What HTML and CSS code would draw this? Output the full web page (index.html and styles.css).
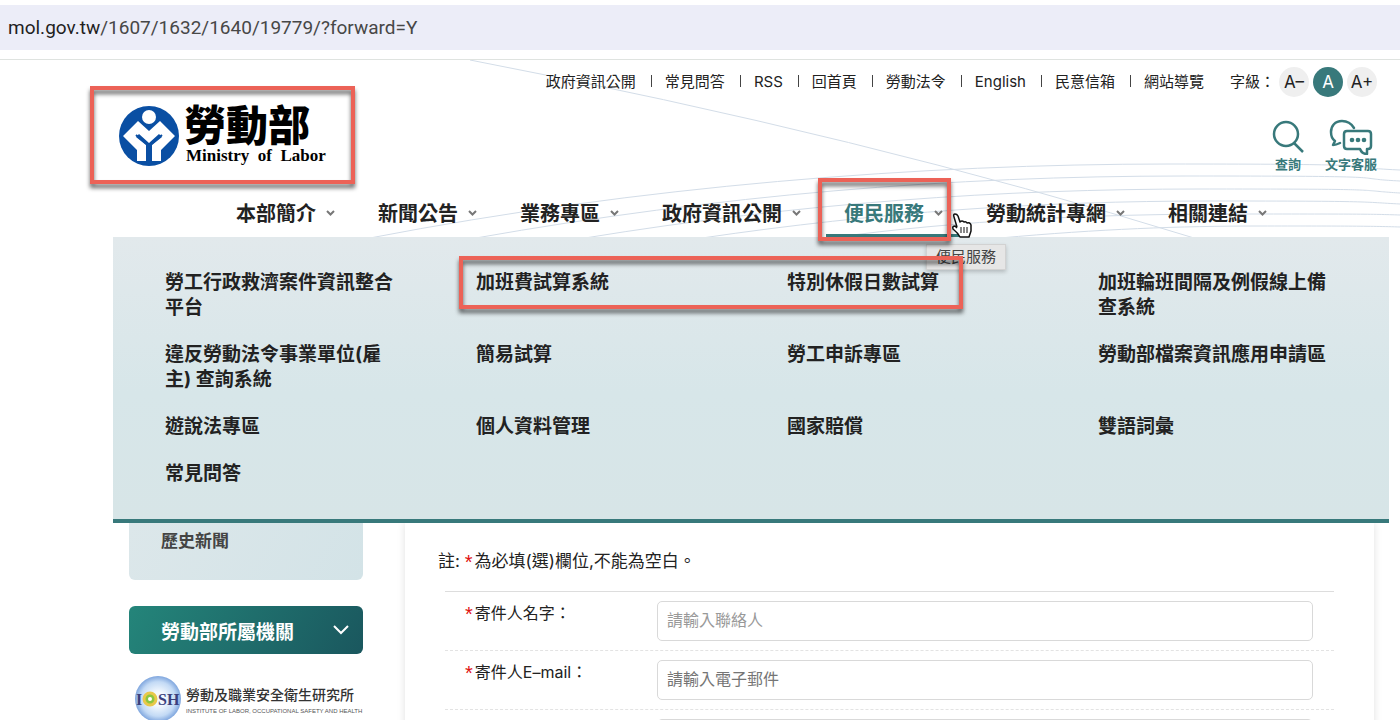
FILE: index.html
```
<!DOCTYPE html>
<html lang="zh-Hant">
<head>
    <meta charset="UTF-8">
    <meta name="viewport" content="width=device-width, initial-scale=1.0">
    <title>勞動部</title>
    <link rel="stylesheet" href="styles.css">
</head>
<body>
    <div class="page">
        <div class="address-bar">
            <div class="address"><span class="domain">mol.gov.tw</span>/1607/1632/1640/19779/?forward=Y</div>
        </div>

        <header class="header">
            <!-- background curves -->
            <svg class="waves" width="1400" height="178" viewBox="0 59 1400 178" fill="none" stroke="#d3dde8" stroke-width="1">
                <path d="M470 59 Q865 135 1194 237"/>
                <path d="M370 237 C640 185 920 163 1170 163 S1330 166 1400 169"/>
                <path d="M476 237 C720 194 950 175 1185 175 S1340 177 1400 180"/>
                <path d="M585 237 C800 202 1000 188 1200 188 S1350 189 1400 192"/>
                <path d="M702 237 C880 211 1040 200 1210 200 S1360 201 1400 203"/>
                <path d="M830 237 C960 219 1100 213 1230 213 S1370 213 1400 214"/>
                <path d="M1000 237 C1100 228 1180 225 1260 225 S1370 225 1400 226"/>
            </svg>

            <div class="header-top">
                <a class="logo" href="#">
                    <svg width="60" height="60" viewBox="0 0 60 60">
                        <circle cx="30" cy="30" r="30" fill="#0a4fa3"/>
                        <circle cx="30" cy="11" r="7" fill="#fff"/>
                        <path fill="#fff" d="M19 15 L30 25 L41 15 L56 30 L42 44 V55 H33 V39 L43 31 L40 28 L30 37 L20 28 L17 31 L27 39 V55 H18 V44 L4 30 Z"/>
                        <path d="M17 29 L30 40 L43 29" fill="none" stroke="#0a4fa3" stroke-width="2"/>
                        <path d="M30 39 V56" fill="none" stroke="#0a4fa3" stroke-width="5"/>
                    </svg>
                    <span class="logo-text">
                        <span class="logo-zh">勞動部</span>
                        <span class="logo-en">Ministry  of  Labor</span>
                    </span>
                </a>

                <div class="tools">
                    <div class="utility">
                        <ul class="links">
                            <li><a href="#">政府資訊公開</a></li>
                            <li><a href="#">常見問答</a></li>
                            <li><a href="#">RSS</a></li>
                            <li><a href="#">回首頁</a></li>
                            <li><a href="#">勞動法令</a></li>
                            <li><a href="#">English</a></li>
                            <li><a href="#">民意信箱</a></li>
                            <li><a href="#">網站導覽</a></li>
                        </ul>
                        <div class="font-size">
                            <span>字級：</span>
                            <button type="button">A–</button>
                            <button type="button" class="active">A</button>
                            <button type="button">A+</button>
                        </div>
                    </div>
                    <div class="actions">
                        <a href="#">
                            <svg width="32" height="36" viewBox="0 0 32 36" fill="none" stroke="#38797b" stroke-width="2.500">
                                <circle cx="14" cy="15" r="12"/>
                                <path d="M22 24 L31 33"/>
                            </svg>
                            查詢
                        </a>
                        <a href="#">
                            <svg width="44" height="36" viewBox="0 0 44 36" fill="none" stroke="#38797b" stroke-width="2.500" stroke-linejoin="round" stroke-linecap="round">
                                <path d="M25 9 C22 4 18 2 13 2 C6 2 2 7 2 13 C2 17 3 20 6 22 L4 26 C7 26 9 25 11 24"/>
                                <path d="M18 12 H39 Q42 12 42 15 V27 Q42 30 39 30 H38 V35 Q33 35 31 30 H18 Q15 30 15 27 V15 Q15 12 18 12 Z"/>
                                <g fill="#38797b" stroke="none">
                                    <circle cx="23" cy="21" r="2.300"/>
                                    <circle cx="29" cy="21" r="2.300"/>
                                    <circle cx="35" cy="21" r="2.300"/>
                                </g>
                            </svg>
                            文字客服
                        </a>
                    </div>
                </div>
            </div>

            <nav class="nav">
                <a href="#">本部簡介<svg class="arrow" viewBox="0 0 9 6"><path d="M1 1 L4.500 4.500 L8 1"/></svg></a>
                <a href="#">新聞公告<svg class="arrow" viewBox="0 0 9 6"><path d="M1 1 L4.500 4.500 L8 1"/></svg></a>
                <a href="#">業務專區<svg class="arrow" viewBox="0 0 9 6"><path d="M1 1 L4.500 4.500 L8 1"/></svg></a>
                <a href="#">政府資訊公開<svg class="arrow" viewBox="0 0 9 6"><path d="M1 1 L4.500 4.500 L8 1"/></svg></a>
                <a href="#" class="current">便民服務<svg class="arrow" viewBox="0 0 9 6"><path d="M1 1 L4.500 4.500 L8 1"/></svg></a>
                <a href="#">勞動統計專網<svg class="arrow" viewBox="0 0 9 6"><path d="M1 1 L4.500 4.500 L8 1"/></svg></a>
                <a href="#">相關連結<svg class="arrow" viewBox="0 0 9 6"><path d="M1 1 L4.500 4.500 L8 1"/></svg></a>
            </nav>
        </header>

        <ul class="submenu">
            <li><a href="#">勞工行政救濟案件資訊整合平台</a></li>
            <li><a href="#">加班費試算系統</a></li>
            <li><a href="#">特別休假日數試算</a></li>
            <li><a href="#">加班輪班間隔及例假線上備查系統</a></li>
            <li><a href="#">違反勞動法令事業單位(雇主) 查詢系統</a></li>
            <li><a href="#">簡易試算</a></li>
            <li><a href="#">勞工申訴專區</a></li>
            <li><a href="#">勞動部檔案資訊應用申請區</a></li>
            <li><a href="#">遊說法專區</a></li>
            <li><a href="#">個人資料管理</a></li>
            <li><a href="#">國家賠償</a></li>
            <li><a href="#">雙語詞彙</a></li>
            <li><a href="#">常見問答</a></li>
        </ul>

        <div class="content">
            <aside class="sidebar">
                <div class="side-list"><a href="#">歷史新聞</a></div>
                <button type="button" class="side-title">
                    勞動部所屬機關
                    <svg width="16" height="10" viewBox="0 0 16 10" fill="none" stroke="#fff" stroke-width="2"><path d="M1 1 L8 8 L15 1"/></svg>
                </button>
                <a class="iosh" href="#">
                    <svg width="46" height="46" viewBox="0 0 46 46">
                        <defs>
                            <radialGradient id="globe">
                                <stop offset="0.300" stop-color="#f4f9fe"/>
                                <stop offset="0.750" stop-color="#c3daf5"/>
                                <stop offset="1" stop-color="#7fa6de"/>
                            </radialGradient>
                        </defs>
                        <circle cx="23" cy="23" r="23" fill="url(#globe)"/>
                        <circle cx="15" cy="23" r="6" fill="#8cc63f" stroke="#e9c84a" stroke-width="3"/>
                        <circle cx="15" cy="23" r="2" fill="#fff"/>
                        <text x="1" y="29" class="iosh-mark">I</text>
                        <text x="23" y="29" class="iosh-mark">SH</text>
                    </svg>
                    <span class="iosh-text">
                        <span class="iosh-zh">勞動及職業安全衛生研究所</span>
                        <span class="iosh-en">INSTITUTE OF LABOR, OCCUPATIONAL SAFETY AND HEALTH</span>
                    </span>
                </a>
            </aside>

            <main class="card">
                <p class="note">註: <em>*</em>為必填(選)欄位,不能為空白。</p>
                <form class="form">
                    <div class="row">
                        <label for="name"><em>*</em>寄件人名字：</label>
                        <input id="name" type="text" class="light" placeholder="請輸入聯絡人">
                    </div>
                    <div class="row">
                        <label for="email"><em>*</em>寄件人E–mail：</label>
                        <input id="email" type="email" placeholder="請輸入電子郵件">
                    </div>
                    <div class="row">
                        <label for="phone"></label>
                        <input id="phone" type="text">
                    </div>
                </form>
            </main>
        </div>

        <div class="tooltip">便民服務</div>
        <div class="mark mark-logo"></div>
        <div class="mark mark-nav"></div>
        <div class="mark mark-links"></div>
        <svg class="pointer" width="22" height="26" viewBox="0 0 22 26">
            <path d="M6 14 L3 4 Q2 1 4 1 Q6 1 7 3 L9 9 Q11 7 13 9 Q15 8 16 10 Q19 9 20 12 L20 18 L18 24 H9 Q7 20 2 16 Q1 13 4 13 L6 15" fill="#fff" stroke="#111" stroke-width="1.500" stroke-linejoin="round"/>
            <path d="M10 14 V20 M13 14 V20 M16 14 V20" stroke="#111" stroke-width="1"/>
        </svg>
    </div>
</body>
</html>
```

FILE: styles.css
```
* {
    box-sizing: border-box;
}
body {
    margin: 0;
    font-family: Inter, "Noto Sans CJK TC", sans-serif;
    color: #222;
    background-color: #fff;
}
a {
    color: inherit;
    text-decoration: none;
}
ul {
    list-style: none;
    margin: 0;
    padding: 0;
}
button {
    font-family: inherit;
    border: none;
    padding: 0;
    cursor: pointer;
}
em {
    margin-right: 2px;
    font-family: "Liberation Sans", sans-serif;
    font-size: 20px;
    font-style: normal;
    line-height: 1;
    vertical-align: -2px;
    color: #e01010;
}
.page {
    position: relative;
    height: 100vh;
    overflow: hidden;
}

/* Address bar */
.address-bar {
    padding: 5px 0 9px;
    border-bottom: 1px solid #dfe3e0;
}
.address {
    height: 45px;
    padding-left: 8px;
    background-color: #ecedf8;
    font-family: Roboto, sans-serif;
    font-size: 19px;
    line-height: 46px;
    color: #474747;
}
.domain {
    color: #1f1f1f;
}

/* Header */
.header {
    position: relative;
}
.waves {
    position: absolute;
    top: 0;
    left: 0;
    z-index: -1;
}
.header-top {
    display: flex;
    justify-content: space-between;
    height: 130px;
    padding: 0 23px 0 119px;
}
.logo {
    display: flex;
    align-items: flex-start;
    gap: 5px;
    padding-top: 46px;
    color: #000;
}
.logo-text {
    display: flex;
    flex-direction: column;
}
.logo-zh {
    font-size: 42px;
    font-weight: 900;
    line-height: 40px;
}
.logo-en {
    padding-left: 2px;
    font-family: "Liberation Serif", serif;
    font-size: 17px;
    font-weight: bold;
    line-height: 20px;
    white-space: pre;
}
.tools {
    display: flex;
    flex-direction: column;
    align-items: flex-end;
    padding-top: 7px;
}
.utility, .links, .font-size {
    display: flex;
    align-items: center;
}
.utility {
    gap: 26px;
    font-size: 15px;
    line-height: 30px;
}
.links li + li::before {
    content: "";
    display: inline-block;
    width: 1px;
    height: 12px;
    margin: 0 13px 0 15px;
    background-color: #444;
}
.font-size {
    gap: 4px;
}
.font-size button {
    width: 30px;
    height: 30px;
    border-radius: 50%;
    background-color: #efefef;
    color: #222;
    font-size: 17px;
}
.font-size .active {
    background-color: #38797b;
    color: #fff;
}
.actions {
    display: flex;
    gap: 21px;
    padding-top: 22px;
}
.actions a {
    display: flex;
    flex-direction: column;
    align-items: center;
    color: #38797b;
    font-size: 13px;
    font-weight: 700;
    line-height: 18px;
}

/* Main navigation */
.nav {
    display: flex;
    padding-left: 218px;
}
.nav a {
    display: flex;
    align-items: center;
    gap: 10px;
    height: 47px;
    padding: 1px 25px 0 18px;
    border-bottom: 3px solid transparent;
    font-size: 20px;
    font-weight: 700;
}
.nav .current {
    color: #38797b;
    border-color: #38797b;
}
.arrow {
    width: 9px;
    height: 6px;
    fill: none;
    stroke: #777;
    stroke-width: 2;
}

/* Dropdown of the current nav item */
.submenu {
    position: relative;
    display: grid;
    grid-template-columns: repeat(4, 1fr);
    gap: 22px 80px;
    margin: 0 11px 0 113px;
    padding: 33px 60px 33px 52px;
    background: linear-gradient(#e2e9ec, #d7e6e9 55%, #d7e5e7);
    border-bottom: 4px solid #38797b;
    font-size: 19px;
    font-weight: 700;
    line-height: 25px;
    color: #222;
    z-index: 1;
}

/* Page content */
.content {
    display: flex;
    gap: 42px;
    padding: 0 26px 0 129px;
}
.sidebar {
    width: 234px;
    flex-shrink: 0;
}
.side-list {
    height: 57px;
    padding: 6px 32px;
    border-radius: 0 0 6px 6px;
    background: linear-gradient(120deg, #dce7ea, #d3e3e7);
    font-size: 17px;
    font-weight: 700;
    line-height: 25px;
    color: #444;
}
.side-title {
    display: flex;
    align-items: center;
    justify-content: space-between;
    width: 100%;
    height: 48px;
    margin: 26px 0 22px;
    padding: 0 14px 0 32px;
    border-radius: 6px;
    background: linear-gradient(120deg, #24857a, #1a575e);
    color: #fff;
    font-size: 19px;
    font-weight: 700;
}
.iosh {
    display: flex;
    gap: 5px;
    padding-left: 6px;
    white-space: nowrap;
}
.iosh-text {
    display: flex;
    flex-direction: column;
    padding-top: 8px;
}
.iosh-mark {
    font-family: "Liberation Serif", serif;
    font-size: 16px;
    font-weight: bold;
    fill: #3a3f7c;
}
.iosh-zh {
    font-size: 14px;
    font-weight: 500;
    line-height: 22px;
    color: #333;
}
.iosh-en {
    font-family: "Liberation Sans", sans-serif;
    font-size: 6px;
    line-height: 10px;
    color: #555;
}
.card {
    flex: 1;
    padding: 23px 40px 0 33px;
    box-shadow: 0 0 8px rgba(0, 0, 0, 0.12);
    background-color: #fff;
}
.note {
    margin: 0;
    font-size: 17px;
    line-height: 30px;
}
.form {
    margin: 15px 0 0 7px;
    border-top: 1px solid #ddd;
    font-size: 16px;
}
.row {
    display: flex;
    padding: 9px 21px 9px 20px;
    border-bottom: 1px dashed #e3e3e3;
}
.row label {
    width: 192px;
    line-height: 24px;
}
.row input {
    flex: 1;
    height: 40px;
    padding: 0 9px 2px;
    border: 1px solid #d9d9d9;
    border-radius: 5px;
    font-family: inherit;
    font-size: 16px;
}
.row input::placeholder {
    color: #757575;
}
.row .light::placeholder {
    color: #999;
}

/* Things floating over the page */
.tooltip, .mark, .pointer {
    position: absolute;
    z-index: 2;
}
.tooltip {
    top: 244px;
    left: 926px;
    padding: 0 9px;
    background-color: #e6e6e6;
    border: 1px solid #d2d2d2;
    box-shadow: 0 2px 4px rgba(0, 0, 0, 0.2);
    font-size: 15px;
    line-height: 24px;
    color: #444;
}
.mark {
    border: 4px solid #ec6257;
    filter: drop-shadow(0 4px 2px rgba(0, 0, 0, 0.6));
}
.mark-logo {
    top: 86px;
    left: 90px;
    width: 265px;
    height: 98px;
}
.mark-nav {
    top: 178px;
    left: 818px;
    width: 133px;
    height: 63px;
}
.mark-links {
    top: 256px;
    left: 459px;
    width: 504px;
    height: 53px;
}
.pointer {
    top: 213px;
    left: 951px;
}
```
